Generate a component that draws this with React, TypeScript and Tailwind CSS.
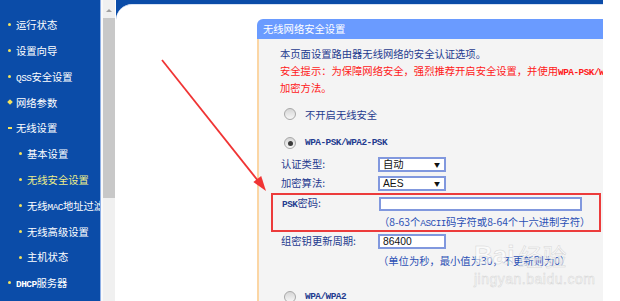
import React from 'react';

const cjk = "font-['Noto_Sans_CJK_SC',sans-serif]";
const mono = "font-['Liberation_Mono',monospace] text-[9.4px] tracking-[-0.5px] leading-none";

type NavItem = {
  label: React.ReactNode;
  level: 0 | 1;
  mark?: 'dot' | 'plus' | 'minus';
  active?: boolean;
};

const navItems: NavItem[] = [
  { label: '运行状态', level: 0 },
  { label: '设置向导', level: 0 },
  { label: <><span className={mono}>QSS</span>安全设置</>, level: 0 },
  { label: '网络参数', level: 0, mark: 'plus' },
  { label: '无线设置', level: 0, mark: 'minus' },
  { label: '基本设置', level: 1 },
  { label: '无线安全设置', level: 1, active: true },
  { label: <>无线<span className={mono}>MAC</span>地址过滤</>, level: 1 },
  { label: '无线高级设置', level: 1 },
  { label: '主机状态', level: 1 },
  { label: <><span className={`${mono} font-bold`}>DHCP</span>服务器</>, level: 0 },
];

const Mark = ({ type }: { type?: NavItem['mark'] }) => {
  if (type === 'plus') return <span className="w-[4px] h-[4px] rotate-45 bg-[#f3e35c]" />;
  if (type === 'minus') return <span className="w-[4px] h-[2px] bg-[#f3e35c]" />;
  return <span className="w-[3px] h-[3px] rounded-full bg-[#f3e35c]" />;
};

const Sidebar = () => (
  <aside className="w-[100px] shrink-0 bg-[#0b4ca8] pt-[12px] overflow-hidden">
    {navItems.map((item, i) => (
      <div
        key={i}
        className={`h-[25.8px] flex items-center whitespace-nowrap text-[10.3px] ${
          item.level === 0 ? 'pl-[7px]' : 'pl-[18px]'
        } ${item.active ? 'text-[#eeee88]' : 'text-white'}`}
      >
        <span className="w-[9px] shrink-0 flex items-center justify-start pl-[1px]">
          <Mark type={item.mark} />
        </span>
        <span className="shrink-0">{item.label}</span>
      </div>
    ))}
  </aside>
);

const Scrollbar = () => (
  <div className="flex shrink-0">
    <div className="w-px bg-[#8fb0e6]" />
    <div className="w-[2px] bg-[#f9f9f9]" />
    <div className="w-[12px] bg-[#f0f0f0] flex flex-col">
      <div className="h-[18px] flex items-center justify-center pt-[2px]">
        <span className="w-0 h-0 border-l-[3px] border-r-[3px] border-b-[3px] border-l-transparent border-r-transparent border-b-[#a0a0a0]" />
      </div>
      <div className="h-[180px] bg-[#c8c8c8]" />
    </div>
    <div className="w-px bg-white" />
  </div>
);

const Radio = ({ checked }: { checked?: boolean }) => (
  <span className="ml-[4px] w-[12px] h-[12px] rounded-full border border-[#a8a8a8] bg-gradient-to-b from-[#d6d6d6] to-[#f7f7f7] flex items-center justify-center shrink-0">
    {checked && <span className="w-[5px] h-[5px] rounded-full bg-[#3a3a3a]" />}
  </span>
);

const Field = ({ value, arrow }: { value: React.ReactNode; arrow?: boolean }) => (
  <div className="w-[68px] h-[15px] border-2 border-[#8198de] bg-white flex items-center justify-between pl-[3px] pr-[4px] text-[#111] text-[10.3px] leading-none">
    <span>{value}</span>
    {arrow && <span className="text-[6px]">▼</span>}
  </div>
);

const Row = ({ label, children }: { label: React.ReactNode; children: React.ReactNode }) => (
  <div className="h-[15px] flex items-center">
    <span className="w-[98px] pl-[1px] leading-none">{label}</span>
    {children}
  </div>
);

const Panel = () => (
  <div className="w-[346px] flex flex-col">
    <div className="h-[20px] bg-[#6a9bff] rounded-tl-[6px] pl-[6px] flex items-center text-white text-[10.3px]">
      无线网络安全设置
    </div>
    <div className="flex-1 bg-[#f4f4f4] border-l-2 border-[#fbd6a5] pl-[21px] pt-[6px] overflow-hidden text-[10.3px] leading-[17px] text-[#1f3b8f]">
      <p>本页面设置路由器无线网络的安全认证选项。</p>
      <p className="text-[#ff1a1a] whitespace-nowrap">
        安全提示：为保障网络安全，强烈推荐开启安全设置，并使用
        <span className={`${mono} font-bold`}>WPA-PSK/WPA2-PSK AES</span>
      </p>
      <p className="text-[#ff1a1a]">加密方法。</p>

      <div className="mt-[10px] h-[16px] flex items-center">
        <Radio />
        <span className="ml-[9px]">不开启无线安全</span>
      </div>
      <div className="mt-[13px] h-[16px] flex items-center">
        <Radio checked />
        <span className={`ml-[9px] ${mono} font-bold`}>WPA-PSK/WPA2-PSK</span>
      </div>

      <div className="mt-[6px]">
        <Row label="认证类型:">
          <Field value="自动" arrow />
        </Row>
      </div>
      <div className="mt-[4px]">
        <Row label="加密算法:">
          <Field value={<span className="font-['Liberation_Sans',sans-serif]">AES</span>} arrow />
        </Row>
      </div>

      <div className="mt-[2px] -ml-[9px] w-[330px] border-2 border-[#ec3b3b] pl-[8px] pt-px">
        <Row label={<><span className={`${mono} font-bold`}>PSK</span>密码:</>}>
          <div className="w-[203px] h-[14px] border-2 border-[#8198de] bg-white" />
        </Row>
        <p className="ml-[98px] mt-[3px] h-[16px] leading-[16px] whitespace-nowrap text-[#2b50b4]">
          （8-63个<span className={mono}>ASCII</span>码字符或8-64个十六进制字符）
        </p>
      </div>

      <div className="mt-[2px]">
        <Row label="组密钥更新周期:">
          <Field value={<span className="font-['Liberation_Sans',sans-serif]">86400</span>} />
        </Row>
      </div>
      <p className="ml-[98px] mt-[4px] h-[16px] leading-[16px] whitespace-nowrap text-[#2b50b4]">
        （单位为秒，最小值为30，不更新则为0）
      </p>

      <div className="mt-[20px] h-[16px] flex items-center">
        <Radio />
        <span className={`ml-[9px] ${mono} font-bold`}>WPA/WPA2</span>
      </div>
    </div>
  </div>
);

export default function App() {
  return (
    <div className={`relative w-[620px] h-[301px] overflow-hidden bg-white flex ${cjk}`}>
      <Sidebar />
      <Scrollbar />
      <main className="w-[487px] shrink-0 bg-[#0b4ca8] pt-[4px] flex flex-col">
        <div className="flex-1 bg-white rounded-tl-[16px] border-t border-[#d7e2f4] pl-[141px] pt-[14px] flex">
          <Panel />
        </div>
      </main>

      {/* watermark */}
      <div className="absolute left-[474px] top-[242px] pointer-events-none select-none text-white/60 [-webkit-text-stroke:0.5px_#d6d6d6] font-['Liberation_Sans',sans-serif]">
        <div className="flex items-end gap-[4px] leading-none">
          <span className="text-[26px] font-bold">Bai</span>
          <span className={`text-[24px] ${cjk}`}>经验</span>
        </div>
        <div className="text-[14px] leading-none mt-[4px] tracking-[0.5px]">jingyan.baidu.com</div>
      </div>

      {/* red arrow */}
      <svg className="absolute left-0 top-0 pointer-events-none" width="620" height="301" viewBox="0 0 620 301">
        <line x1="162" y1="60" x2="259" y2="182" stroke="#f03434" strokeWidth="1.8" />
        <polygon points="266,191 253.4,182.1 261.2,175.9" fill="#f03434" />
      </svg>
    </div>
  );
}
